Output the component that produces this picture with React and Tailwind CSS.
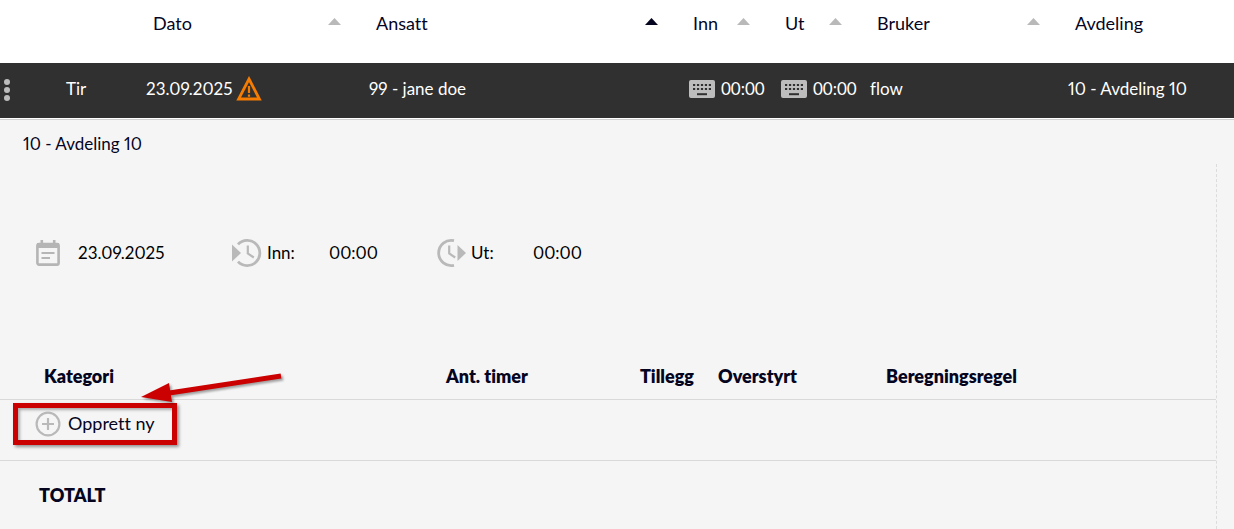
const columns = [
  { label: 'Dato' },
  { label: 'Ansatt', sorted: true },
  { label: 'Inn' },
  { label: 'Ut' },
  { label: 'Bruker' },
];

const SortArrow = ({ active }) => (
  <svg viewBox="0 0 13 7" className={active ? 'w-[13px] h-[7px] mb-1 text-[#05051f]' : 'w-[13px] h-[7px] mb-1 text-[#b9b9b9]'} aria-hidden="true">
    <path d="M6.5 0L13 7H0z" fill="currentColor" />
  </svg>
);

const WarningIcon = () => (
  <svg viewBox="0 0 26 25" className="w-[26px] h-[25px] shrink-0" aria-hidden="true">
    <path d="M13 3L23.4 23H2.6z" fill="none" stroke="#f57c00" strokeWidth="2.8" />
    <path d="M13 10v7M13 18.4v2.4" stroke="#f57c00" strokeWidth="2.2" />
  </svg>
);

const KeyboardIcon = () => (
  <svg viewBox="0 0 26 18" className="w-[26px] h-[18px] shrink-0" aria-hidden="true">
    <rect width="26" height="18" rx="2" fill="#bdbdbd" />
    <path d="M4 5h18M4 9h18" stroke="#303030" strokeWidth="2.2" strokeDasharray="2.2 1.75" />
    <path d="M8 14.2h10" stroke="#303030" strokeWidth="2" />
  </svg>
);

const CalendarIcon = () => (
  <svg viewBox="0 0 24 26" className="w-6 h-[26px] shrink-0" aria-hidden="true">
    <rect x="1.4" y="4" width="21.2" height="20.6" rx="1.6" fill="none" stroke="#b5b5b5" strokeWidth="2.6" />
    <path d="M1 3h22v5H1zM4.5 0h2.6v4H4.5zM16.9 0h2.6v4h-2.6z" fill="#b5b5b5" />
    <path d="M5.5 13h13M5.5 18h8.5" stroke="#b5b5b5" strokeWidth="2.2" />
  </svg>
);

const ClockInIcon = () => (
  <svg viewBox="0 0 32 30" className="w-8 h-[30px] shrink-0" aria-hidden="true">
    <path d="M7 6.4A12.6 12.6 0 1 1 7 23.6" fill="none" stroke="#b9b9b9" strokeWidth="2.8" />
    <path d="M16.8 7.5v8l6 4" fill="none" stroke="#b9b9b9" strokeWidth="2.2" />
    <path d="M1 6.5l9 8.5-9 8.5z" fill="#b9b9b9" />
  </svg>
);

const ClockOutIcon = () => (
  <svg viewBox="0 0 32 30" className="w-8 h-[30px] shrink-0" aria-hidden="true">
    <path d="M19 2.7A12.6 12.6 0 1 0 19 27.3" fill="none" stroke="#b9b9b9" strokeWidth="2.8" />
    <path d="M14.2 7.5v8l6 4" fill="none" stroke="#b9b9b9" strokeWidth="2.2" />
    <path d="M22.5 7l8.5 8-8.5 8z" fill="#b9b9b9" />
  </svg>
);

const AddIcon = () => (
  <svg viewBox="0 0 26 26" className="w-[26px] h-[26px] shrink-0" aria-hidden="true">
    <circle cx="13" cy="13" r="11.4" fill="none" stroke="#b9b9b9" strokeWidth="2.2" />
    <path d="M13 7v12M7 13h12" stroke="#b9b9b9" strokeWidth="2.2" />
  </svg>
);

const ShiftTable = () => (
  <table className="w-full table-fixed border-collapse bg-white text-left">
    <colgroup>
      <col className="w-[60px]" />
      <col className="w-[80px]" />
      <col className="w-[223px]" />
      <col />
      <col className="w-[92px]" />
      <col className="w-[92px]" />
      <col className="w-[198px]" />
      <col className="w-[172px]" />
    </colgroup>
    <thead>
      <tr className="h-[63px] align-top text-lg leading-6 text-[#05051f]">
        <td />
        <td />
        {columns.map((col) => (
          <th key={col.label} className="pt-[11px] pl-[13px] pr-[22px] font-normal">
            <button type="button" className="flex w-full items-center justify-between">
              {col.label}
              <SortArrow active={col.sorted} />
            </button>
          </th>
        ))}
        <th className="pt-[11px] pl-[13px] font-normal">Avdeling</th>
      </tr>
    </thead>
    <tbody>
      <tr className="h-[55px] bg-[#303030] text-[17px] leading-6 text-white whitespace-nowrap">
        <td className="pb-1">
          <button type="button" aria-label="Meny" className="flex flex-col gap-[2px] pt-[2px] pl-1">
            <span className="size-[6px] rounded-full bg-[#bdbdbd]" />
            <span className="size-[6px] rounded-full bg-[#bdbdbd]" />
            <span className="size-[6px] rounded-full bg-[#bdbdbd]" />
          </button>
        </td>
        <td className="pb-1 pl-[6px]">Tir</td>
        <td className="pb-1 pl-[6px]">
          <span className="flex items-center gap-1">
            23.09.2025
            <WarningIcon />
          </span>
        </td>
        <td className="pb-1 pl-[6px]">99 - jane doe</td>
        <td className="pb-1 pl-[9px] tabular-nums">
          <span className="flex items-center gap-[6px]">
            <KeyboardIcon />
            00:00
          </span>
        </td>
        <td className="pb-1 pl-[9px] tabular-nums">
          <span className="flex items-center gap-[6px]">
            <KeyboardIcon />
            00:00
          </span>
        </td>
        <td className="pb-1 pl-[6px]">flow</td>
        <td className="pb-1 pl-[6px]">10 - Avdeling 10</td>
      </tr>
    </tbody>
  </table>
);

const CategoryTable = () => (
  <table className="w-full table-fixed border-collapse text-left text-lg leading-6 text-[#05051f]">
    <colgroup>
      <col className="w-[446px]" />
      <col className="w-[194px]" />
      <col className="w-[78px]" />
      <col className="w-[168px]" />
      <col />
    </colgroup>
    <thead>
      <tr className="h-[46px] border-b border-[#d9d9d9]">
        <th className="pl-11 font-extrabold">Kategori</th>
        <th className="font-extrabold">Ant. timer</th>
        <th className="font-extrabold">Tillegg</th>
        <th className="font-extrabold">Overstyrt</th>
        <th className="font-extrabold">Beregningsregel</th>
      </tr>
    </thead>
    <tbody>
      <tr className="h-[61px] border-b border-[#d9d9d9] align-top">
        <td colSpan={5} className="pt-[3px] pl-[13px]">
          <div className="relative w-[164px]">
            <button type="button" className="flex h-[42px] w-full items-center gap-[7px] border-5 border-[#cb0000] pl-[17px] shadow-[2px_2px_3px_rgba(0,0,0,0.4),inset_2px_2px_3px_rgba(0,0,0,0.3)]">
              <AddIcon />
              <span className="pb-[2px]">Opprett ny</span>
            </button>
            <svg viewBox="0 0 150 40" className="absolute -top-9 left-[125px] h-10 w-[150px] drop-shadow-[2px_2px_1px_rgba(0,0,0,0.35)]" aria-hidden="true">
              <path d="M143 9L28 26.5" stroke="#cb0000" strokeWidth="5" />
              <path d="M3 30L31 16l3 19z" fill="#cb0000" />
            </svg>
          </div>
        </td>
      </tr>
      <tr className="h-[69px]">
        <th colSpan={5} className="pl-[39px] font-extrabold">TOTALT</th>
      </tr>
    </tbody>
  </table>
);

const App = () => {
  return (
    <main className="min-h-screen bg-[#f5f5f5] font-['Lato',sans-serif] text-[17px] leading-6 text-black proportional-nums [font-variant-ligatures:none]">
      <ShiftTable />
      <section className="border-t border-white">
        <h2 className="border-t border-[#d0d0d0] pt-3 pl-[23px] pb-2 text-[#05051f]">10 - Avdeling 10</h2>
        <div className="mr-[17px] border-r border-dashed border-[#dcdcdc]">
          <div className="flex items-center pt-[74px] pl-9 pb-[85px]">
            <div className="flex w-[195px] items-center gap-[18px]">
              <CalendarIcon />
              23.09.2025
            </div>
            <div className="flex w-[98px] items-center gap-1">
              <ClockInIcon />
              Inn:
            </div>
            <span className="w-[106px]">00:00</span>
            <div className="flex w-[98px] items-center gap-1">
              <ClockOutIcon />
              Ut:
            </div>
            <span>00:00</span>
          </div>
          <CategoryTable />
        </div>
      </section>
    </main>
  );
};

export default App;
